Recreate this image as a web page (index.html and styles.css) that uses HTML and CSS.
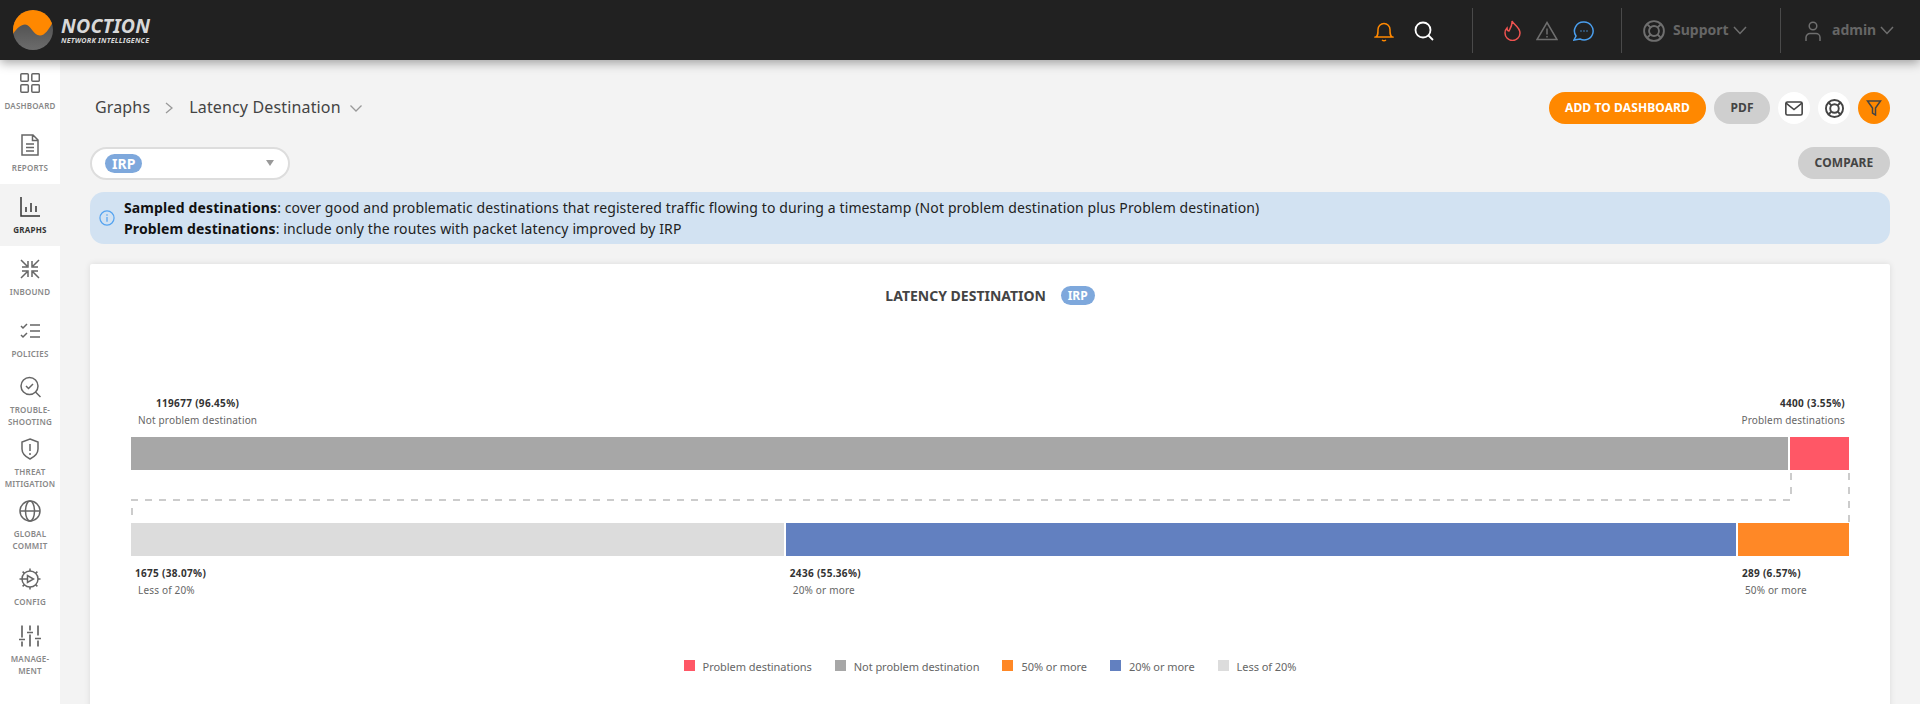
FILE: index.html
```html
<!DOCTYPE html>
<html lang="en">
<head>
<meta charset="utf-8">
<title>Latency Destination</title>
<link rel="stylesheet" href="styles.css">
</head>
<body>
<header class="topbar">
  <div class="logo">
    <svg class="logo-mark" width="40" height="40" viewBox="0 0 40 40">
      <defs>
        <clipPath id="lc"><circle cx="20" cy="20" r="20"/></clipPath>
        <linearGradient id="lg" x1="0" y1="0" x2="0" y2="1"><stop offset="0" stop-color="#454545"/><stop offset="1" stop-color="#6c6c6c"/></linearGradient>
      </defs>
      <g clip-path="url(#lc)">
        <rect width="40" height="40" fill="url(#lg)"/>
        <path d="M0 24C4 18 8 14.500 12 14.500C18 14.500 20 25.500 27 25.500C32 25.500 36 19 40 12V0H0Z" fill="#ff8800"/>
      </g>
    </svg>
    <div class="logo-text"><span class="logo-name">NOCTION</span><span class="logo-sub">NETWORK INTELLIGENCE</span></div>
  </div>
  <div class="top-right">
    <div class="top-group g1">
      <svg class="ic" width="20" height="22" viewBox="0 0 20 22" fill="none" stroke="#ff8800" stroke-width="1.500"><path d="M2 17c2-1.500 2-3 2-7.500a6 6 0 0 1 12 0c0 4.500 0 6 2 7.500zM.5 17h19M8 20q2 1.500 4 0"/></svg>
      <svg class="ic" width="20" height="20" viewBox="0 0 20 20" fill="none" stroke="#fff" stroke-width="1.800"><circle cx="9" cy="9" r="7.500"/><path d="M14.500 14.500L19 19"/></svg>
    </div>
    <div class="top-group g2">
      <svg class="ic" width="17" height="21" viewBox="0 0 17 21" fill="none" stroke="#ef5350" stroke-width="1.500"><path d="M8 1c1 3 8 6 8 12a7.500 7.500 0 0 1-15 0c0-2 .5-3.500 2-5 0 2 1 3 2 3 1.500-3 3.500-6 3-10z"/></svg>
      <svg class="ic" width="22" height="20" viewBox="0 0 22 20" fill="none" stroke="#6f6f6f" stroke-width="1.500"><path d="M11 1.500L21 18.500H1zM11 7.500v6M11 15v1.500"/></svg>
      <svg class="ic" width="21" height="20" viewBox="0 0 21 20" fill="none" stroke="#4a9eed" stroke-width="1.500"><path d="M11 1a9 9 0 1 1-4 17l-6 1 2-4A9 9 0 0 1 11 1z"/><path d="M7.500 10h1M10.500 10h1M13.500 10h1"/></svg>
    </div>
    <div class="top-group g3">
      <svg class="ic" width="22" height="22" viewBox="0 0 20 20" fill="none" stroke="#6f6f6f" stroke-width="1.700"><circle cx="10" cy="10" r="9"/><circle cx="10" cy="10" r="4.500"/><path d="M3.700 3.700l3.200 3.200M16.300 3.700l-3.200 3.200M3.700 16.300l3.200-3.200M16.300 16.300l-3.200-3.200"/></svg>
      <span class="top-label">Support</span>
      <svg class="chev" width="14" height="9" viewBox="0 0 14 9" fill="none" stroke="#6f6f6f" stroke-width="1.500"><path d="M1 1l6 6.500L13 1"/></svg>
    </div>
    <div class="top-group g4">
      <svg class="ic" width="16" height="20" viewBox="0 0 16 20" fill="none" stroke="#6f6f6f" stroke-width="1.500"><circle cx="8" cy="5" r="3.800"/><path d="M1 20v-3.500a4 4 0 0 1 4-4h6a4 4 0 0 1 4 4V20"/></svg>
      <span class="top-label">admin</span>
      <svg class="chev" width="14" height="9" viewBox="0 0 14 9" fill="none" stroke="#6f6f6f" stroke-width="1.500"><path d="M1 1l6 6.500L13 1"/></svg>
    </div>
  </div>
</header>

<div class="shell">
  <nav class="sidebar">
    <a class="nav-item"><svg width="20" height="20" viewBox="0 0 20 20" fill="none" stroke="#666" stroke-width="1.500"><rect x=".8" y=".8" width="7.500" height="7.500" rx="1"/><rect x="11.800" y=".8" width="7.500" height="7.500" rx="1"/><rect x=".8" y="11.800" width="7.500" height="7.500" rx="1"/><rect x="11.800" y="11.800" width="7.500" height="7.500" rx="1"/></svg><span>DASHBOARD</span></a>
    <a class="nav-item"><svg width="18" height="22" viewBox="0 0 18 22" fill="none" stroke="#666" stroke-width="1.500"><path d="M1 1h11l5 5v15H1zM11.500 1v5.500H17M5 10h8M5 13.500h8M5 17h8"/></svg><span>REPORTS</span></a>
    <a class="nav-item active"><svg width="20" height="20" viewBox="0 0 20 20" fill="none" stroke="#333" stroke-width="1.500"><path d="M1 0v19h19M6 15v-5M11 15V6M16 15V9"/></svg><span>GRAPHS</span></a>
    <a class="nav-item"><svg width="20" height="20" viewBox="0 0 20 20" fill="none" stroke="#666" stroke-width="1.500"><path d="M1 1l6 6M8 2v6H2M19 1l-6 6M12 2v6h6M1 19l6-6M8 18v-6H2M19 19l-6-6M12 18v-6h6"/></svg><span>INBOUND</span></a>
    <a class="nav-item"><svg width="20" height="16" viewBox="0 0 20 16" fill="none" stroke="#666" stroke-width="1.500"><path d="M1 3l2 2 4-4M1 12l2 2 4-4M10 2h10M10 8h10M10 14h10"/></svg><span>POLICIES</span></a>
    <a class="nav-item two"><svg width="21" height="21" viewBox="0 0 21 21" fill="none" stroke="#666" stroke-width="1.500"><circle cx="9.500" cy="9.500" r="8.500"/><path d="M15.500 15.500L20.500 20.500M6 9.500l2.500 2.500 4.500-4.500"/></svg><span>TROUBLE-<br>SHOOTING</span></a>
    <a class="nav-item two"><svg width="18" height="22" viewBox="0 0 18 22" fill="none" stroke="#666" stroke-width="1.500"><path d="M9 1l8 3v7c0 5-4 8-8 10-4-2-8-5-8-10V4zM9 6v7M9 15v2"/></svg><span>THREAT<br>MITIGATION</span></a>
    <a class="nav-item two"><svg width="22" height="22" viewBox="0 0 22 22" fill="none" stroke="#666" stroke-width="1.500"><circle cx="11" cy="11" r="10"/><ellipse cx="11" cy="11" rx="4.500" ry="10"/><path d="M1 11h20"/></svg><span>GLOBAL<br>COMMIT</span></a>
    <a class="nav-item"><svg width="22" height="22" viewBox="0 0 22 22" fill="none" stroke="#666" stroke-width="1.500"><circle cx="11" cy="11" r="8"/><path d="M11 .5v2.500M11 19v2.500M.5 11H3M19 11h2.500M3.600 3.600l1.800 1.800M16.600 16.600l1.800 1.800M18.400 3.600l-1.800 1.800M5.400 16.600l-1.800 1.800M8.500 7.500v7l6-3.500zM3 11h5.500"/></svg><span>CONFIG</span></a>
    <a class="nav-item two manage"><svg width="22" height="21" viewBox="0 0 22 21" fill="none" stroke="#666" stroke-width="1.700"><path d="M3 0v12M3 16v5M0 14h6M11 0v5M11 9v12M8 7h6M19 0v10M19 15v6M16 13h6"/></svg><span>MANAGE-<br>MENT</span></a>
  </nav>

  <main class="content">
    <div class="toolbar">
      <div class="crumbs">
        <span>Graphs</span>
        <svg class="sep" width="8" height="12" viewBox="0 0 8 12" fill="none" stroke="#999" stroke-width="1.300"><path d="M1 1l6 5-6 5"/></svg>
        <span>Latency Destination</span>
        <svg class="drop" width="12" height="7" viewBox="0 0 12 7" fill="none" stroke="#999" stroke-width="1.300"><path d="M.5.5L6 6 11.500.5"/></svg>
      </div>
      <div class="actions">
        <button class="btn orange">ADD TO DASHBOARD</button>
        <button class="btn grey pdf">PDF</button>
        <span class="round white"><svg width="18" height="15" viewBox="0 0 17 14" fill="none" stroke="#444" stroke-width="1.500"><rect x=".8" y=".8" width="15.400" height="12.400" rx="1.500"/><path d="M1 2l7.500 6L16 2"/></svg></span>
        <span class="round white"><svg width="19" height="19" viewBox="0 0 20 20" fill="none" stroke="#444" stroke-width="2"><circle cx="10" cy="10" r="9"/><circle cx="10" cy="10" r="4.500"/><path d="M3.700 3.700l3.200 3.200M16.300 3.700l-3.200 3.200M3.700 16.300l3.200-3.200M16.300 16.300l-3.200-3.200"/></svg></span>
        <span class="round orange-bg"><svg width="16" height="16" viewBox="0 0 15 16" fill="none" stroke="#444" stroke-width="1.500"><path d="M1 1h13L9 8v7l-3-2V8z"/></svg></span>
      </div>
    </div>

    <div class="filters">
      <div class="select"><span class="tag">IRP</span><i class="caret"></i></div>
      <button class="btn grey compare">COMPARE</button>
    </div>

    <div class="notice">
      <svg width="16" height="16" viewBox="0 0 17 17" fill="none" stroke="#55a3f0" stroke-width="1.300"><circle cx="8.500" cy="8.500" r="7.500"/><path d="M8.500 7.500v5M8.500 4.500v1.500"/></svg>
      <p><b>Sampled destinations</b>: cover good and problematic destinations that registered traffic flowing to during a timestamp (Not problem destination plus Problem destination)<br><b>Problem destinations</b>: include only the routes with packet latency improved by IRP</p>
    </div>

    <section class="card">
      <h2 class="card-title">LATENCY DESTINATION <span class="tag small">IRP</span></h2>

      <div class="chart">
        <div class="row labels top">
          <div class="lab"><b>119677 (96.45%)</b><span>Not problem destination</span></div>
          <div class="lab end"><b>4400 (3.55%)</b><span>Problem destinations</span></div>
        </div>
        <div class="row bar">
          <div class="seg grey-a" style="flex-basis:96.45%"></div>
          <div class="seg red" style="flex-basis:3.45%"></div>
        </div>
        <svg class="links" width="1720" height="53" viewBox="0 0 1720 53" fill="none" stroke="#ccc" stroke-width="2" stroke-dasharray="7 7">
          <path d="M0 30H1660V3"/><path stroke-dasharray="none" d="M1 38v7"/>
          <path d="M1718 3V52"/>
        </svg>
        <div class="row bar lower">
          <div class="seg light" style="flex-basis:38%"></div>
          <div class="seg blue" style="flex-basis:55.3%"></div>
          <div class="seg amber" style="flex-basis:6.46%"></div>
        </div>
        <div class="row bar-labels">
          <div class="seg lab-b" style="flex-basis:38%"><b>1675 (38.07%)</b><span>Less of 20%</span></div>
          <div class="seg lab-b" style="flex-basis:55.3%"><b>2436 (55.36%)</b><span>20% or more</span></div>
          <div class="seg lab-b" style="flex-basis:6.46%"><b>289 (6.57%)</b><span>50% or more</span></div>
        </div>
      </div>

      <ul class="legend">
        <li><i class="red"></i>Problem destinations</li>
        <li><i class="grey-a"></i>Not problem destination</li>
        <li><i class="amber"></i>50% or more</li>
        <li><i class="blue"></i>20% or more</li>
        <li><i class="light"></i>Less of 20%</li>
      </ul>
    </section>
  </main>
</div>
</body>
</html>
```
FILE: styles.css
```css
* { box-sizing: border-box; }
html, body { margin: 0; height: 100%; overflow: hidden; }
body { font-family: "Noto Sans", sans-serif; background: #f3f3f3; color: #444; }

.topbar { position: relative; z-index: 2; height: 60px; background: #212121; display: flex; justify-content: space-between; box-shadow: 0 3px 10px rgba(0,0,0,.35); }
.logo { display: flex; align-items: center; padding-left: 13px; gap: 8px; }
.logo-text { display: flex; flex-direction: column; color: #d8d8d8; font-style: italic; font-weight: 700; padding-bottom: 2px; }
.logo-name { font-size: 19.500px; line-height: 21px; letter-spacing: .2px; }
.logo-sub { font-size: 7.200px; line-height: 8px; letter-spacing: .2px; }
.top-right { display: flex; padding-top: 8px; height: 53px; }
.top-group { display: flex; align-items: center; height: 45px; }
.g1 { gap: 20px; width: 98px; }
.g2 { gap: 15px; width: 149px; padding-left: 31px; border-left: 1px solid #4a4a4a; }
.g3 { width: 159px; padding-left: 21px; border-left: 1px solid #4a4a4a; }
.g4 { width: 140px; padding-left: 24px; border-left: 1px solid #4a4a4a; }
.top-label { font-size: 14px; font-weight: 700; color: #666; margin: -2px 4px 0 8px; }
.g4 .top-label { margin-left: 11px; }
.chev { margin-top: -1px; }

.shell { display: flex; height: 644px; }
.sidebar { width: 60px; flex: none; background: #fff; display: flex; flex-direction: column; }
.nav-item { display: flex; flex-direction: column; align-items: center; text-align: center; height: 62px; padding-top: 12px; font-size: 8px; line-height: 12px; font-weight: 600; color: #888; letter-spacing: .2px; }
.nav-item svg { height: 22px; flex: none; margin-bottom: 6px; }
.nav-item.two { padding-top: 6px; }
.nav-item.manage { padding-top: 7px; }
.nav-item.active { background: #f3f3f3; color: #333; font-weight: 700; }

.content { flex: 1; padding: 32px 30px 0; overflow: hidden; }
.toolbar { display: flex; justify-content: space-between; align-items: center; height: 32px; }
.crumbs { display: flex; align-items: center; padding: 0 0 2px 5px; font-size: 16px; letter-spacing: .15px; color: #444; }
.sep { margin: 2px 16px 0 15px; }
.drop { margin-left: 9px; margin-top: 2px; }
.actions { display: flex; gap: 8px; align-items: center; }
.btn { border: 0; height: 32px; border-radius: 16px; font: 700 12px "Noto Sans", sans-serif; letter-spacing: .12px; padding: 0 0 2px; }
.orange { background: #ff8800; color: #fff; width: 157px; }
.grey { background: #cfcfcf; color: #444; }
.pdf { width: 56px; }
.compare { width: 92px; }
.round { width: 32px; height: 32px; border-radius: 50%; display: flex; align-items: center; justify-content: center; }
.white { background: #fff; }
.orange-bg { background: #ff8800; }

.filters { display: flex; justify-content: space-between; align-items: center; margin-top: 23px; height: 32px; }
.select { width: 200px; height: 33px; border: 2px solid #ddd; border-radius: 17px; background: #fff; display: flex; align-items: center; justify-content: space-between; padding: 0 14px 0 13px; }
.tag { background: #7ea8dc; color: #fff; font-size: 14px; font-weight: 700; line-height: 19px; border-radius: 10px; padding: 0 7px; }
.tag.small { display: inline-block; font-size: 12px; line-height: 19px; padding: 0 7px; margin-left: 11px; vertical-align: top; }
.caret { width: 0; height: 0; border: 4px solid transparent; border-top: 6px solid #999; border-bottom: 0; }

.notice { display: flex; align-items: center; gap: 9px; margin-top: 13px; height: 52px; padding-left: 9px; background: #d2e2f2; border-radius: 14px; color: #222; }
.notice p { margin: 0; font-size: 14px; line-height: 21px; letter-spacing: .12px; }
.notice b { color: #111; }

.card { margin-top: 20px; height: 500px; background: #fff; border-radius: 2px; box-shadow: 0 0 6px rgba(0,0,0,.1); padding: 0 41px; }
.card-title { margin: 0; padding-top: 22px; height: 131px; text-align: center; font-size: 14px; line-height: 19px; font-weight: 700; color: #444; }
.chart { width: 1718px; position: relative; }
.row { display: flex; }
.seg { flex: 0 1 auto; min-width: 0; }
.labels.top { height: 42px; justify-content: space-between; }
.bar { height: 33px; gap: 2px; }
.lower { margin-top: 53px; }
.links { display: block; position: absolute; left: 0; top: 75px; }
.lab { display: flex; flex-direction: column; align-items: center; height: 34px; margin-left: 7px; font-size: 10px; line-height: 17px; letter-spacing: .17px; color: #666; }
.lab b, .lab-b b { color: #333; font-weight: 700; letter-spacing: .32px; }
.lab.end { align-items: flex-end; margin: 0 4px 0 0; }
.bar-labels { gap: 2px; margin-top: 9px; }
.lab-b { display: flex; flex-direction: column; align-items: flex-start; padding-left: 4px; font-size: 10px; line-height: 17px; letter-spacing: .17px; color: #666; white-space: nowrap; }
.lab-b span { margin-left: 3px; }

.grey-a { background: #a7a7a7; }
.red { background: #ff5766; }
.light { background: #dcdcdc; }
.blue { background: #6280c0; }
.amber { background: #ff8826; }

.legend { list-style: none; margin: 60px 0 0; padding: 0; display: flex; justify-content: center; gap: 23px; font-size: 11px; line-height: 16px; letter-spacing: -.05px; color: #666; }
.legend li { display: flex; align-items: center; }
.legend i { width: 11px; height: 11px; margin-right: 8px; margin-top: -3px; }
```
